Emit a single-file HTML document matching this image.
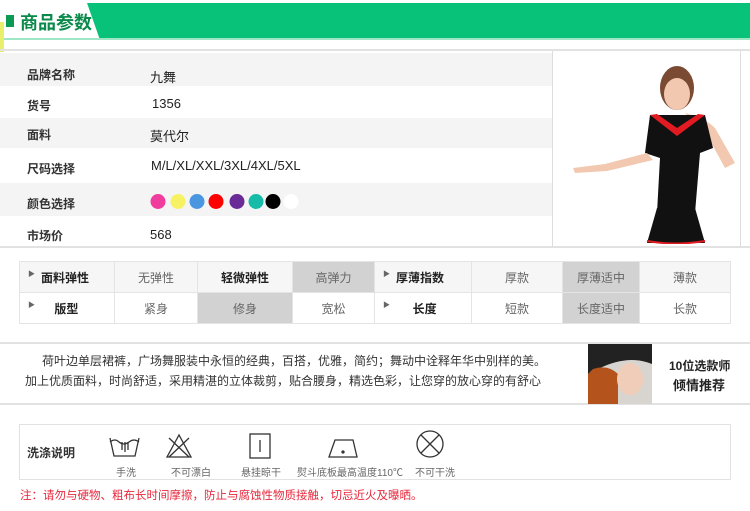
<!DOCTYPE html>
<html><head><meta charset="utf-8"><style>
*{margin:0;padding:0;box-sizing:border-box}
body{width:750px;height:511px;background:#fff;position:relative;overflow:hidden;font-family:"Liberation Sans","Noto Sans CJK SC",sans-serif;color:#333}
.a{position:absolute}
.lbl{font-size:12px;font-weight:bold;color:#333}
.val{font-size:13px;color:#222}
table{border-collapse:collapse;position:absolute;left:19px;top:261px;width:712px;font-size:12px;text-align:center}
td{border:1px solid #e4e4e4;height:31px;color:#666}
td.b{font-weight:bold;color:#222;font-size:12px}
td.h{background:#d2d2d2}
.tri{font-size:7px;color:#666;vertical-align:top;margin-right:6px}
.cap{font-size:10px;color:#666;position:absolute;top:464px}
</style></head><body>
<div class="a" style="left:0;top:3px;width:750px;height:36px;background:#08c27a"></div>
<svg class="a" style="left:0;top:3px" width="110" height="37"><polygon points="0,0 87,0 100,37 0,37" fill="#fff"/></svg>
<div class="a" style="left:0;top:38px;width:750px;height:2px;background:#9fe6c6"></div>
<div class="a" style="left:0;top:22px;width:4px;height:30px;background:#e8ef6a"></div>
<div class="a" style="left:6px;top:15px;width:8px;height:12px;background:#0a9a52"></div>
<div class="a" style="left:20px;top:9px;font-size:18px;font-weight:bold;color:#0a8a4a">商品参数</div>
<div class="a" style="left:0;top:49px;width:750px;height:2px;background:#e2e2e2"></div>
<div class="a" style="left:0;top:53px;width:552px;height:33px;background:#f4f4f4"></div>
<div class="a" style="left:0;top:118px;width:552px;height:30px;background:#f4f4f4"></div>
<div class="a" style="left:0;top:183px;width:552px;height:33px;background:#f4f4f4"></div>
<div class="a" style="left:0;top:246px;width:750px;height:2px;background:#e2e2e2"></div>
<div class="a" style="left:552px;top:51px;width:1px;height:196px;background:#ddd"></div>
<div class="a" style="left:740px;top:51px;width:1px;height:196px;background:#ddd"></div>
<div class="a lbl" style="left:27px;top:66px">品牌名称</div><div class="a val" style="left:150px;top:67px">九舞</div>
<div class="a lbl" style="left:27px;top:97px">货号</div><div class="a val" style="left:152px;top:96px">1356</div>
<div class="a lbl" style="left:27px;top:126px">面料</div><div class="a val" style="left:150px;top:126px">莫代尔</div>
<div class="a lbl" style="left:27px;top:160px">尺码选择</div><div class="a val" style="left:151px;top:158px">M/L/XL/XXL/3XL/4XL/5XL</div>
<div class="a lbl" style="left:27px;top:195px">颜色选择</div>
<svg class="a" style="left:150px;top:193px" width="150" height="18">
<circle cx="8" cy="8.5" r="7.5" fill="#f03c9c"/><circle cx="28" cy="8.5" r="7.5" fill="#f7f263"/><circle cx="47" cy="8.5" r="7.5" fill="#4a96e0"/><circle cx="66" cy="8.5" r="7.5" fill="#f00"/><circle cx="87" cy="8.5" r="7.5" fill="#6a2a98"/><circle cx="106" cy="8.5" r="7.5" fill="#16bca8"/><circle cx="123" cy="8.5" r="7.5" fill="#000"/><circle cx="141" cy="8.5" r="7.5" fill="#fff"/></svg>
<div class="a lbl" style="left:27px;top:227px">市场价</div><div class="a val" style="left:150px;top:227px">568</div>
<svg class="a" style="left:565px;top:58px" width="175" height="186">
<ellipse cx="112" cy="30" rx="17" ry="22" fill="#7a4a32"/>
<ellipse cx="112" cy="36" rx="13" ry="16" fill="#f2c9b0"/>
<path d="M120 55 Q140 60 150 70 L170 105 L160 110 L148 88 Z" fill="#f2c9b0"/>
<path d="M85 57 L140 57 L148 90 L135 95 L130 155 L92 155 L95 100 L80 95 Z" fill="#111"/>
<path d="M85 57 L112 78 L140 57 L133 56 L112 70 L92 56 Z" fill="#e21a22"/>
<path d="M82 95 L40 106 L8 110 L10 115 L42 113 L88 102 Z" fill="#f2c9b0"/>
<path d="M92 150 L130 150 L140 185 L82 185 Z" fill="#111"/>
<path d="M82 183 Q110 188 140 183" stroke="#e21a22" stroke-width="2" fill="none"/>
</svg>
<table>
<tr style="background:#f6f6f6"><td class="b" style="width:95px;text-align:left;padding-left:8px"><span class="tri">▶</span>面料弹性</td><td style="width:83px">无弹性</td><td class="b" style="width:95px">轻微弹性</td><td class="h" style="width:82px">高弹力</td><td class="b" style="width:97px;text-align:left;padding-left:8px"><span class="tri">▶</span>厚薄指数</td><td style="width:91px">厚款</td><td class="h" style="width:77px">厚薄适中</td><td>薄款</td></tr>
<tr><td class="b" style="text-align:left;padding-left:8px"><span class="tri">▶</span>&nbsp;&nbsp;&nbsp;&nbsp;版型</td><td>紧身</td><td class="h">修身</td><td>宽松</td><td class="b" style="text-align:left;padding-left:8px"><span class="tri">▶</span>&nbsp;&nbsp;&nbsp;&nbsp;&nbsp;长度</td><td>短款</td><td class="h">长度适中</td><td>长款</td></tr>
</table>
<div class="a" style="left:0;top:342px;width:750px;height:2px;background:#e2e2e2"></div>
<div class="a" style="left:0;top:403px;width:750px;height:2px;background:#e2e2e2"></div>
<div class="a" style="left:42px;top:352px;font-size:12px;color:#333">荷叶边单层裙裤，广场舞服装中永恒的经典，百搭，优雅，简约；舞动中诠释年华中别样的美。</div>
<div class="a" style="left:25px;top:372px;font-size:12px;color:#333">加上优质面料，时尚舒适，采用精湛的立体裁剪，贴合腰身，精选色彩，让您穿的放心穿的有舒心</div>
<svg class="a" style="left:588px;top:344px" width="64" height="60"><rect width="64" height="60" fill="#d8d4d0"/><path d="M0 0 H64 V20 Q40 10 10 25 L0 60 Z" fill="#222"/><path d="M5 25 Q20 20 30 30 L30 60 H0 V30Z" fill="#b4531c"/><ellipse cx="42" cy="35" rx="13" ry="16" fill="#f0cdb8"/></svg>
<div class="a" style="left:669px;top:357px;font-size:12px;font-weight:bold;color:#222">10位选款师</div>
<div class="a" style="left:673px;top:375px;font-size:13px;font-weight:bold;color:#222">倾情推荐</div>
<div class="a" style="left:19px;top:424px;width:712px;height:56px;border:1px solid #e2e2e2"></div>
<div class="a" style="left:27px;top:444px;font-size:12px;font-weight:bold;color:#333">洗涤说明</div>
<svg class="a" style="left:105px;top:430px" width="360" height="32" fill="none" stroke="#333" stroke-width="1.3">
<path d="M5 8 L9 26 H30 L34 8"/><path d="M5 12 Q10 8 14 12 Q19 16 24 12 Q29 8 34 12"/><path d="M17 20 V12 M20 22 V12 M23 20 V12"/>
<path d="M74 5 L62 27 H86 Z"/><path d="M64 8 L84 27 M84 8 L64 27"/>
<rect x="145" y="4" width="20" height="24"/><path d="M155 10 V22"/>
<path d="M224 27 L230 10 H248 L252 27 Z"/><circle cx="238" cy="22" r="1" fill="#333"/>
<circle cx="325" cy="14" r="13"/><path d="M316 5 L334 23 M334 5 L316 23"/>
</svg>
<div class="cap" style="left:116px">手洗</div>
<div class="cap" style="left:171px">不可漂白</div>
<div class="cap" style="left:241px">悬挂晾干</div>
<div class="cap" style="left:297px">熨斗底板最高温度110℃</div>
<div class="cap" style="left:415px">不可干洗</div>
<div class="a" style="left:20px;top:487px;font-size:11.5px;color:#e8283c">注：请勿与硬物、粗布长时间摩擦，防止与腐蚀性物质接触，切忌近火及曝晒。</div>
</body></html>
